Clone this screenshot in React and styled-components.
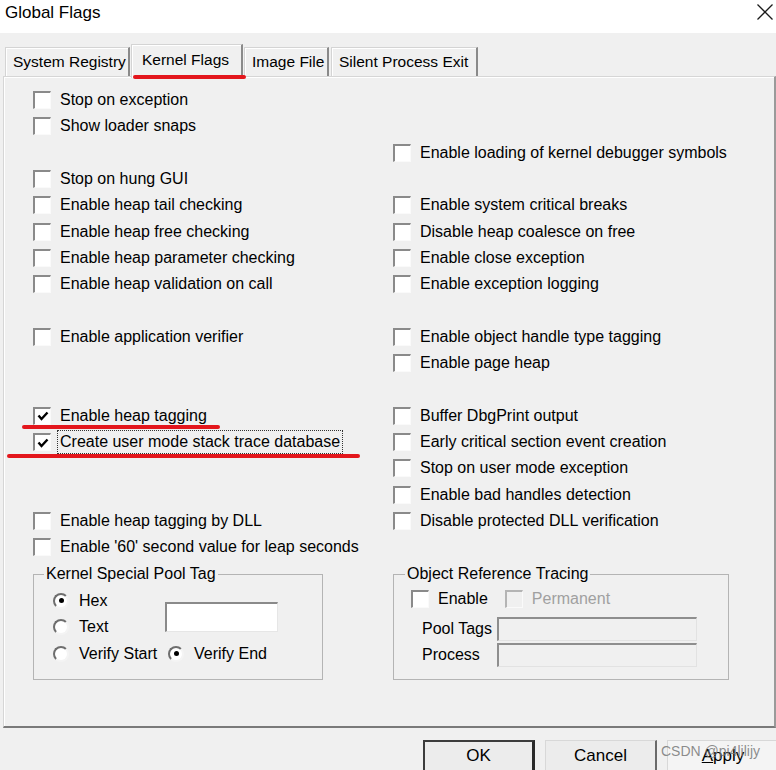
import styled, { createGlobalStyle } from 'styled-components';

const GlobalStyle = createGlobalStyle`
  html, body {
    margin: 0;
    padding: 0;
    background: #f0f0f0;
  }
`;

const Win = styled.div`
  position: relative;
  width: 776px;
  height: 770px;
  overflow: hidden;
  background: #f0f0f0;
  font-family: "Liberation Sans", Arial, sans-serif;
  color: #000;
`;

const TitleBar = styled.div`
  height: 33px;
  box-sizing: border-box;
  background: #fff;
  display: flex;
  justify-content: space-between;
  align-items: flex-start;
  padding: 3px 3px 0 5px;
  font-size: 17px;
  line-height: 20px;
`;

const CloseBtn = styled.svg`
  width: 16px;
  height: 16px;
  margin-top: 1px;
`;

const TabStrip = styled.div`
  position: relative;
  z-index: 2;
  display: flex;
  align-items: flex-end;
  gap: 2px;
  height: 43px;
  padding-left: 5px;
`;

const Tab = styled.div`
  box-sizing: border-box;
  flex: none;
  display: flex;
  align-items: center;
  width: ${(p) => p.$w + (p.$active ? 2 : 0)}px;
  height: ${(p) => (p.$active ? '34px' : '29px')};
  margin: ${(p) => (p.$active ? '0 -1px -2px' : '0')};
  padding: ${(p) => (p.$active ? '0 0 3px 10px' : '0 0 0 7px')};
  font-size: 15.5px;
  background: #f0f0f0;
  border: 1px solid #d4d4d4;
  border-bottom: none;
  border-right: 2px solid #8a8a8a;
  box-shadow: inset 1px 1px #fff;
  white-space: nowrap;
  position: relative;
  z-index: ${(p) => (p.$active ? 3 : 1)};
`;

const Panel = styled.div`
  box-sizing: border-box;
  position: relative;
  z-index: 1;
  width: 773px;
  height: 652px;
  margin-left: 3px;
  border: 1px solid #d6d6d6;
  border-right: 2px solid #9a9a9a;
  border-bottom: 2px solid #7a7a7a;
  box-shadow: inset 1px 1px #fff;
`;

const FlagGrid = styled.div`
  display: grid;
  grid-template-columns: 360px 1fr;
  grid-auto-rows: 26.3px;
  padding: 10px 0 0 29px;
`;

const Item = styled.label`
  display: flex;
  align-items: center;
  gap: ${(p) => p.$gap || 9}px;
  font-size: 16px;
  white-space: nowrap;
  color: ${(p) => (p.$disabled ? '#a0a0a0' : '#000')};
  margin-right: ${(p) => p.$mr || 0}px;
`;

const Box = styled.span`
  box-sizing: border-box;
  flex: none;
  width: 18px;
  height: 18px;
  display: flex;
  align-items: center;
  justify-content: center;
  background: ${(p) => (p.$disabled ? '#f0f0f0' : '#fff')};
  border-top: 2px solid ${(p) => (p.$disabled ? '#b4b4b4' : '#8a8a8a')};
  border-left: 2px solid ${(p) => (p.$disabled ? '#b4b4b4' : '#8a8a8a')};
  border-right: 1px solid #fafafa;
  border-bottom: 1px solid #fafafa;
`;

const Focus = styled.span`
  outline: 1px dotted #333;
  outline-offset: 2px;
`;

const Radio = styled.span`
  box-sizing: border-box;
  flex: none;
  width: 16px;
  height: 16px;
  border-radius: 50%;
  background: #fff;
  border: 2px solid;
  border-color: #6e6e6e #f4f4f4 #f4f4f4 #6e6e6e;
  display: flex;
  align-items: center;
  justify-content: center;
  &::after {
    content: '';
    width: 5px;
    height: 5px;
    border-radius: 50%;
    background: ${(p) => (p.$on ? '#000' : 'transparent')};
  }
`;

const GroupRow = styled.div`
  display: flex;
  gap: 70px;
  padding-left: 29px;
  margin-top: 5px;
`;

const Group = styled.fieldset`
  box-sizing: border-box;
  width: ${(p) => p.$w}px;
  margin: 0;
  padding: 4px 0 12px ${(p) => p.$pl}px;
  border: 1px solid #b4b4b4;
`;

const Legend = styled.legend`
  font-size: 16px;
  line-height: 18px;
  padding: 0 2px;
  margin-left: ${(p) => p.$ml}px;
`;

const RadioGrid = styled.div`
  display: grid;
  grid-template-columns: 115px 1fr;
  grid-auto-rows: 26.5px;
`;

const TagInput = styled.div`
  grid-column: 2;
  grid-row: 1 / 3;
  align-self: start;
  margin: 15px 0 0 -3px;
  box-sizing: border-box;
  width: 113px;
  height: 30px;
  background: #fff;
  border-top: 2px solid #8a8a8a;
  border-left: 2px solid #8a8a8a;
  border-right: 1px solid #e6e6e6;
  border-bottom: 1px solid #e6e6e6;
`;

const CheckLine = styled.div`
  display: flex;
  align-items: center;
  height: 24px;
`;

const FieldGrid = styled.div`
  display: grid;
  grid-template-columns: 75px 200px;
  grid-auto-rows: 24px;
  row-gap: 2px;
  margin-top: 6px;
  padding-left: 11px;
  align-items: center;
  font-size: 16px;
`;

const Field = styled.div`
  box-sizing: border-box;
  height: 24px;
  background: #f0f0f0;
  border-top: 2px solid #8e8e8e;
  border-left: 2px solid #8e8e8e;
  border-right: 1px solid #e2e2e2;
  border-bottom: 1px solid #e2e2e2;
`;

const ButtonBar = styled.div`
  display: flex;
  gap: 10px;
  margin-top: 12px;
  padding-left: 423px;
`;

const Button = styled.div`
  box-sizing: border-box;
  flex: none;
  width: 112px;
  height: 42px;
  padding-bottom: 12px;
  display: flex;
  align-items: center;
  justify-content: center;
  font-size: 17px;
  background: ${(p) => (p.$variant === 'apply' ? '#f4f4f4' : '#ececec')};
  border: ${(p) => (p.$variant === 'default' ? '2px solid #3c3c3c' : '1px solid #d8d8d8')};
  border-right: ${(p) =>
    p.$variant === 'default'
      ? '3px solid #2a2a2a'
      : p.$variant === 'apply'
      ? '1px solid #d8d8d8'
      : '2px solid #6a6a6a'};
  border-bottom: none;
  u {
    text-decoration: underline;
  }
`;

const RedMark = styled.div`
  position: absolute;
  z-index: 5;
  left: ${(p) => p.$x}px;
  top: ${(p) => p.$y}px;
  width: ${(p) => p.$w}px;
  height: 4px;
  border-radius: 2px;
  background: #e3161c;
`;

const Watermark = styled.div`
  position: absolute;
  z-index: 6;
  left: 661px;
  top: 743px;
  font-size: 14px;
  color: rgba(120, 120, 120, 0.85);
  white-space: nowrap;
`;

const Tick = () => (
  <svg width="12" height="12" viewBox="0 0 12 12">
    <path d="M1.5 5.5 L4.5 9 L10.5 2.5" fill="none" stroke="#000" strokeWidth="2.4" />
  </svg>
);

const Check = ({ label, checked, focus, disabled, gap, mr }) => (
  <Item $disabled={disabled} $gap={gap} $mr={mr}>
    <Box $disabled={disabled}>{checked && <Tick />}</Box>
    {focus ? <Focus>{label}</Focus> : label}
  </Item>
);

const RadioItem = ({ label, on }) => (
  <Item $gap={10}>
    <Radio $on={on} />
    {label}
  </Item>
);

const left = [
  'Stop on exception',
  'Show loader snaps',
  null,
  'Stop on hung GUI',
  'Enable heap tail checking',
  'Enable heap free checking',
  'Enable heap parameter checking',
  'Enable heap validation on call',
  null,
  'Enable application verifier',
  null,
  null,
  { label: 'Enable heap tagging', checked: true },
  { label: 'Create user mode stack trace database', checked: true, focus: true },
  null,
  null,
  'Enable heap tagging by DLL',
  "Enable '60' second value for leap seconds",
];

const right = [
  null,
  null,
  'Enable loading of kernel debugger symbols',
  null,
  'Enable system critical breaks',
  'Disable heap coalesce on free',
  'Enable close exception',
  'Enable exception logging',
  null,
  'Enable object handle type tagging',
  'Enable page heap',
  null,
  'Buffer DbgPrint output',
  'Early critical section event creation',
  'Stop on user mode exception',
  'Enable bad handles detection',
  'Disable protected DLL verification',
  null,
];

const renderCell = (c, key) => {
  if (!c) return <div key={key} />;
  if (typeof c === 'string') return <Check key={key} label={c} />;
  return <Check key={key} {...c} />;
};

const tabs = [
  { label: 'System Registry', w: 125 },
  { label: 'Kernel Flags', w: 110, active: true },
  { label: 'Image File', w: 85 },
  { label: 'Silent Process Exit', w: 147 },
];

function App() {
  const cells = [];
  left.forEach((l, i) => {
    cells.push(renderCell(l, 'l' + i));
    cells.push(renderCell(right[i], 'r' + i));
  });

  return (
    <Win>
      <GlobalStyle />
      <TitleBar>
        <span>Global Flags</span>
        <CloseBtn viewBox="0 0 16 16">
          <path d="M0.5 0.5 L15.5 15.5 M15.5 0.5 L0.5 15.5" stroke="#1a1a1a" strokeWidth="1.3" />
        </CloseBtn>
      </TitleBar>

      <TabStrip>
        {tabs.map((t) => (
          <Tab key={t.label} $w={t.w} $active={t.active}>
            {t.label}
          </Tab>
        ))}
      </TabStrip>

      <Panel>
        <FlagGrid>{cells}</FlagGrid>

        <GroupRow>
          <Group $w={290} $pl={19}>
            <Legend $ml={-9}>Kernel Special Pool Tag</Legend>
            <RadioGrid>
              <RadioItem label="Hex" on />
              <TagInput />
              <RadioItem label="Text" />
              <RadioItem label="Verify Start" />
              <RadioItem label="Verify End" on />
            </RadioGrid>
          </Group>

          <Group $w={336} $pl={17}>
            <Legend $ml={-6}>Object Reference Tracing</Legend>
            <CheckLine>
              <Check label="Enable" mr={17} />
              <Check label="Permanent" disabled />
            </CheckLine>
            <FieldGrid>
              <span>Pool Tags</span>
              <Field />
              <span>Process</span>
              <Field />
            </FieldGrid>
          </Group>
        </GroupRow>
      </Panel>

      <ButtonBar>
        <Button $variant="default">OK</Button>
        <Button>Cancel</Button>
        <Button $variant="apply">
          <span>
            <u>A</u>pply
          </span>
        </Button>
      </ButtonBar>

      <RedMark $x={133} $y={75} $w={113} />
      <RedMark $x={22} $y={425} $w={198} />
      <RedMark $x={7} $y={454} $w={353} />
      <Watermark>CSDN @pi4lilijy</Watermark>
    </Win>
  );
}

export default App;
